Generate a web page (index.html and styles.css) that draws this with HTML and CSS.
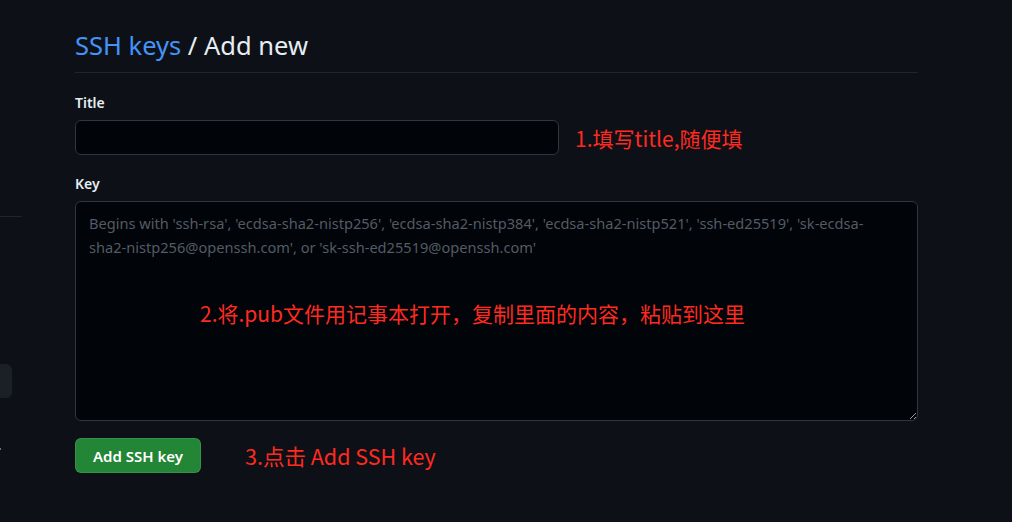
FILE: index.html
```html
<!DOCTYPE html>
<html>

<head>
    <meta charset="utf-8">
    <title>SSH keys / Add new</title>
    <link rel="stylesheet" href="styles.css">
</head>

<body>
    <div class="page">
        <!-- 왼쪽 사이드바 (잘린 부분) -->
        <aside class="side">
            <div class="side-line first"></div>
            <div class="side-box"></div>
            <div class="side-dot"></div>
            <div class="side-line"></div>
        </aside>

        <main class="main">
            <h1 class="head">
                <a href="#" class="crumb">SSH keys</a> / Add new
            </h1>

            <form class="form">
                <label class="label" for="title">Title</label>
                <div class="row">
                    <input type="text" id="title" class="input">
                    <span class="note">1.填写title,随便填</span>
                </div>

                <label class="label label-key" for="key">Key</label>
                <div class="area-wrap">
                    <textarea id="key" class="area" placeholder="Begins with 'ssh-rsa', 'ecdsa-sha2-nistp256', 'ecdsa-sha2-nistp384', 'ecdsa-sha2-nistp521', 'ssh-ed25519', 'sk-ecdsa-sha2-nistp256@openssh.com', or 'sk-ssh-ed25519@openssh.com'"></textarea>
                    <span class="note note-over">2.将.pub文件用记事本打开，复制里面的内容，粘贴到这里</span>
                </div>

                <div class="row">
                    <button type="button" class="btn">Add SSH key</button>
                    <span class="note note-btn">3.点击 Add SSH key</span>
                </div>
            </form>
        </main>
    </div>
</body>

</html>
```

FILE: styles.css
```css
body {
    margin: 0;
    background-color: #0d1117;
    color: #e6edf3;
    font-family: "Noto Sans", "Open Sans", sans-serif;
}

.page {
    display: flex;
    gap: 53px;
    height: 522px;
    overflow: hidden;
}

/* 사이드바 */
.side {
    width: 22px;
    flex-shrink: 0;
}
.side-line {
    height: 1px;
    background-color: #21262d;
    margin-top: 78px;
}
.side-line.first {
    margin-top: 216px;
}
.side-box {
    width: 12px;
    height: 34px;
    margin-top: 147px;
    background-color: #1b2027;
    border-radius: 0 6px 6px 0;
}
.side-dot {
    width: 1px;
    height: 2px;
    margin-top: 50px;
    background-color: #6e7681;
}

/* 본문 */
.main {
    width: 843px;
}

.head {
    margin: 25px 0 0;
    padding-bottom: 7px;
    font-size: 25.5px;
    font-weight: normal;
    line-height: 40px;
    border-bottom: 1px solid #21262d;
}
.crumb {
    color: #4493f8;
    text-decoration: none;
}

.form {
    display: flex;
    flex-direction: column;
}

.label {
    margin-top: 19px;
    font-size: 14px;
    font-weight: 600;
    line-height: 22px;
    margin-bottom: 6px;
}
.label-key {
    margin-top: 18px;
}

.row {
    display: flex;
    align-items: center;
}

.input {
    box-sizing: border-box;
    width: 484px;
    height: 35px;
    background-color: #010409;
    border: 1px solid #30363d;
    border-radius: 6px;
    color: #e6edf3;
}

.note {
    color: #ff2a1f;
    font-family: "Noto Sans CJK SC", sans-serif;
    font-size: 21px;
    margin-left: 16px;
}

.area-wrap {
    position: relative;
}
.area {
    display: block;
    box-sizing: border-box;
    width: 843px;
    height: 220px;
    padding: 9px 20px 9px 13px;
    background-color: #010409;
    border: 1px solid #30363d;
    border-radius: 6px;
    color: #e6edf3;
    font-family: "Noto Sans", "Open Sans", sans-serif;
    font-size: 14.6px;
    line-height: 24px;
    resize: vertical;
}
.area::placeholder {
    color: #535b64;
}
/* 안내문구는 입력칸 위에 겹쳐 놓음 */
.note-over {
    position: absolute;
    left: 125px;
    top: 97px;
    margin: 0;
}

.btn {
    margin-top: 17px;
    height: 35px;
    padding: 0 17px;
    background-color: #238636;
    border: 1px solid rgba(240, 246, 252, .1);
    border-radius: 6px;
    color: #fff;
    font-family: "Noto Sans", "Open Sans", sans-serif;
    font-size: 15px;
    font-weight: 600;
}
.note-btn {
    margin-top: 17px;
    margin-left: 44px;
    font-size: 21.5px;
}
```
